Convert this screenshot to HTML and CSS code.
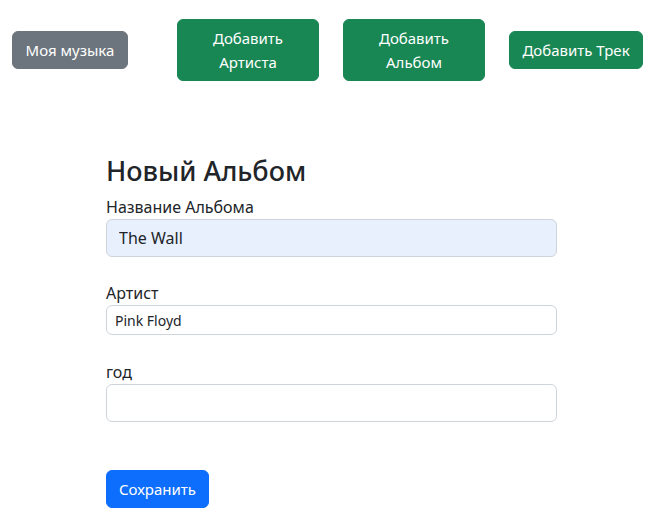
FILE: index.html
```html
<!DOCTYPE html>
<html lang="ru">
<head>
<meta charset="utf-8">
<title>Новый Альбом</title>
<link rel="stylesheet" href="styles.css">
</head>
<body>
<nav class="topbar">
  <a class="btn btn-secondary first">Моя музыка</a>
  <a class="btn btn-success wide">Добавить Артиста</a>
  <a class="btn btn-success wide">Добавить Альбом</a>
  <a class="btn btn-success last">Добавить Трек</a>
</nav>
<main class="form-wrap">
  <h2 class="title">Новый Альбом</h2>
  <div class="field">
    <label class="label">Название Альбома</label>
    <input class="control autofill" type="text" value="The Wall">
  </div>
  <div class="field field-sm">
    <label class="label">Артист</label>
    <input class="control control-sm" type="text" value="Pink Floyd">
  </div>
  <div class="field">
    <label class="label">год</label>
    <input class="control" type="text" value="">
  </div>
  <div class="actions">
    <button class="btn btn-primary save" type="button">Сохранить</button>
  </div>
</main>
</body>
</html>
```

FILE: styles.css
```css
* { box-sizing: border-box; }
html, body { margin: 0; padding: 0; }
body {
  font-family: "Noto Sans", "Open Sans", sans-serif;
  font-size: 16px;
  line-height: 1.5;
  color: #212529;
  background: #fff;
}
.topbar {
  display: flex;
  align-items: center;
  gap: 24px;
  padding: 19px 12px 0 12px;
}
.btn {
  display: inline-block;
  flex-shrink: 0;
  border: 1px solid transparent;
  border-radius: 6px;
  padding: 6px 12px;
  font-family: inherit;
  font-size: 15px;
  line-height: 24px;
  text-align: center;
  color: #fff;
  text-decoration: none;
  cursor: pointer;
}
.btn-secondary { background: #6c757d; border-color: #6c757d; }
.btn-success { background: #198754; border-color: #198754; }
.btn-primary { background: #0d6efd; border-color: #0d6efd; }
.first { width: 116px; margin-right: 25px; white-space: nowrap; padding: 6px 0; }
.wide { width: 142px; }
.last { width: 134px; white-space: nowrap; padding: 6px 0; }
.save { width: 103px; padding: 6px 0; }
.form-wrap {
  width: 451px;
  margin: 74px 0 0 106px;
}
.title {
  font-size: 27px;
  font-weight: 500;
  line-height: 1.2;
  margin: 0 0 8px 0;
}
.field { margin-bottom: 24px; }
.field-sm { margin-bottom: 25px; }
.label { display: block; }
.control {
  display: block;
  width: 100%;
  height: 38px;
  padding: 6px 12px;
  font-family: inherit;
  font-size: 16px;
  line-height: 24px;
  color: #212529;
  background: #fff;
  border: 1px solid #ced4da;
  border-radius: 6px;
  margin: 0;
}
.autofill { background: #e8f0fe; }
.control-sm {
  height: 30px;
  padding: 3px 8px;
  font-size: 14px;
  line-height: 21px;
}
.actions { padding-top: 24px; }
```
